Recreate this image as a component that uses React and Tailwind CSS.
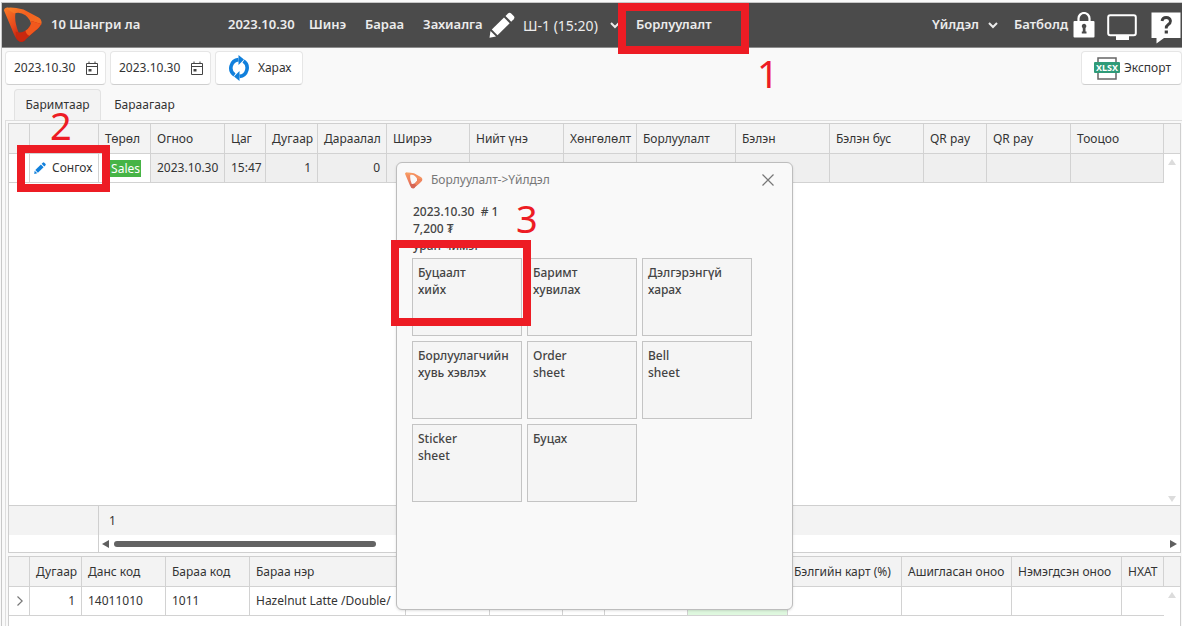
import React, { useState } from 'react';

const salesColumns = [
  { label: '', width: 'w-[21px]' },
  { label: '', width: 'w-[69px]' },
  { label: 'Төрөл', width: 'w-[52px]' },
  { label: 'Огноо', width: 'w-[74px]' },
  { label: 'Цаг', width: 'w-[41px]' },
  { label: 'Дугаар', width: 'w-[52px]' },
  { label: 'Дараалал', width: 'w-[69px]' },
  { label: 'Ширээ', width: 'w-[83px]' },
  { label: 'Нийт үнэ', width: 'w-[94px]' },
  { label: 'Хөнгөлөлт', width: 'w-[73px]' },
  { label: 'Борлуулалт', width: 'w-[99px]' },
  { label: 'Бэлэн', width: 'w-[94px]' },
  { label: 'Бэлэн бус', width: 'w-[94px]' },
  { label: 'QR pay', width: 'w-[63px]' },
  { label: 'QR pay', width: 'w-[84px]' },
  { label: 'Тооцоо', width: 'w-auto' },
];

const itemColumns = [
  { label: '', width: 'w-[21px]' },
  { label: 'Дугаар', width: 'w-[52px]' },
  { label: 'Данс код', width: 'w-[84px]' },
  { label: 'Бараа код', width: 'w-[84px]' },
  { label: 'Бараа нэр', width: 'w-[156px]' },
  { label: '', width: 'w-[84px]' },
  { label: '', width: 'w-[73px]' },
  { label: '', width: 'w-[42px]' },
  { label: '', width: 'w-[83px]' },
  { label: '', width: 'w-[100px]' },
  { label: 'Бэлгийн карт (%)', width: 'w-[114px]' },
  { label: 'Ашигласан оноо', width: 'w-[110px]' },
  { label: 'Нэмэгдсэн оноо', width: 'w-[110px]' },
  { label: 'НХАТ', width: 'w-auto' },
];

const actions = [
  ['Буцаалт', 'хийх'],
  ['Баримт', 'хувилах'],
  ['Дэлгэрэнгүй', 'харах'],
  ['Борлуулагчийн', 'хувь хэвлэх'],
  ['Order', 'sheet'],
  ['Bell', 'sheet'],
  ['Sticker', 'sheet'],
  ['Буцах'],
];

const Logo = ({ className }) => (
  <svg viewBox="0 0 40 36" className={className} aria-hidden="true">
    <defs>
      <linearGradient id="logoTop" x1="0" y1="0" x2="1" y2="0.4">
        <stop offset="0" stopColor="#f9852b" />
        <stop offset="0.6" stopColor="#f4601f" />
        <stop offset="1" stopColor="#f26a22" />
      </linearGradient>
      <linearGradient id="logoSide" x1="0" y1="0" x2="0.6" y2="1">
        <stop offset="0" stopColor="#fb7d26" />
        <stop offset="0.6" stopColor="#e8481c" />
        <stop offset="1" stopColor="#b81d10" />
      </linearGradient>
    </defs>
    <path d="M0 3Q0 0 4 0L12 5Q10 13 15 26L22 34Q18 37 14 34Q11 30 8 22Z" fill="url(#logoSide)" />
    <path d="M2 0.500Q8 -1 20 2L35 10Q40 13 38 18L28 18Q27 12 22 8Q17 4 10 6Z" fill="url(#logoTop)" />
    <path d="M38 17Q37 20 32 24L21 34Q17 37 14 33Q12 29 12 25Q17 27 22 24Q28 20 28 14Z" fill="#c9280f" />
    <path d="M38 17Q37 20 32 24L26 29Q23 28 22 24Q28 20 28 14Z" fill="#f0581d" />
  </svg>
);

const Chevron = () => (
  <svg viewBox="0 0 10 7" className="h-[7px] w-[10px]" fill="none" stroke="currentColor" strokeWidth="2" aria-hidden="true">
    <path d="M1 1l4 4 4-4" />
  </svg>
);

const Pencil = ({ className }) => (
  <svg viewBox="0 0 26 26" className={className} fill="currentColor" aria-hidden="true">
    <path d="M16.500 4l2.500-2.500q1.500-1.500 3.200 0l2.500 2.500q1.500 1.600 0 3.200L22.200 9.700z" />
    <path d="M15 5.500l5.700 5.700L8.500 23.200l-5.700-5.700z" />
    <path d="M1.500 19l5.500 5.500L0.500 25.800z" />
  </svg>
);

const LockIcon = () => (
  <svg viewBox="0 0 22 26" className="h-[26px] w-[22px]" aria-hidden="true">
    <path d="M5.500 10V6.500a5.500 5.500 0 0 1 11 0V10" fill="none" stroke="white" strokeWidth="2.200" />
    <rect x="0.500" y="9" width="21" height="16.500" rx="1" fill="white" />
    <path d="M8.800 14.500a2.300 2.300 0 1 1 3.700 1.500v3.500h1v2H8.800v-2h1v-3z" fill="#4b4b4b" />
  </svg>
);

const MonitorIcon = () => (
  <svg viewBox="0 0 30 27" className="h-[27px] w-[30px]" aria-hidden="true">
    <rect x="1.200" y="1.200" width="27.600" height="20" rx="2" fill="none" stroke="white" strokeWidth="2" />
    <path d="M9 21h13v5H9z" fill="white" />
  </svg>
);

const HelpIcon = () => (
  <svg viewBox="0 0 30 32" className="h-[32px] w-[30px]" aria-hidden="true">
    <path d="M0.500 0.500h29V26H13l-7.500 5.500V26h-5z" fill="white" />
    <path d="M11 9q0.500-3.500 4.200-3.500T19.500 9q0 2-2.200 3.500T15.200 16.500" fill="none" stroke="#3f3f3f" strokeWidth="2.800" />
    <rect x="13.700" y="18.500" width="3.200" height="3" fill="#3f3f3f" />
  </svg>
);

const CalendarIcon = () => (
  <svg viewBox="0 0 14 15" className="h-[15px] w-[14px]" fill="none" stroke="#444" strokeWidth="1" aria-hidden="true">
    <path d="M1.500 2.500h11v11h-11zM1.500 5.500h11M4 0.500v2M10 0.500v2" />
    <path d="M3.500 8h3v2.500h-3z" fill="#444" stroke="none" />
  </svg>
);

const RefreshIcon = () => (
  <svg viewBox="0 0 22 26" className="h-[26px] w-[22px]" aria-hidden="true">
    <path d="M6.500 20A8.500 8.500 0 0 1 10.500 4.600M15.500 6A8.500 8.500 0 0 1 11.500 21.400" fill="none" stroke="#1180dc" strokeWidth="3.600" />
    <path d="M10.500 0l5.500 4.600L10.500 10zM11.500 16v10l-5.500-4.600z" fill="#1180dc" />
  </svg>
);

const XlsxIcon = () => (
  <svg viewBox="0 0 26 23" className="h-[23px] w-[26px]" aria-hidden="true">
    <path d="M4 1h18v21H4z" fill="white" stroke="#666" strokeWidth="1.500" />
    <rect x="0" y="5" width="26" height="11" rx="1" fill="#2f9b78" />
    <text x="13" y="14" textAnchor="middle" fontSize="9" fontWeight="700" fill="white">XLSX</text>
  </svg>
);

const Triangle = ({ className = '', d }) => (
  <svg viewBox="0 0 8 8" className={`h-2 w-2 shrink-0 ${className}`} fill="currentColor" aria-hidden="true">
    <path d={d} />
  </svg>
);

const DateField = ({ label, value, onChange }) => (
  <div className="flex h-[34px] w-[101px] items-center rounded-sm border border-[#e6e6e6] border-b-[#cfcfcf] bg-white pl-2 pr-1.5">
    <input
      aria-label={label}
      type="text"
      value={value}
      onChange={(e) => onChange(e.target.value)}
      className="min-w-0 flex-1 bg-transparent outline-none"
    />
    <button type="button" aria-label={`${label} сонгох`}>
      <CalendarIcon />
    </button>
  </div>
);

const HeadRow = ({ columns }) => (
  <thead>
    <tr className="h-[30px] bg-[#f3f3f3] text-left">
      {columns.map((column, i) => (
        <th key={i} className="whitespace-nowrap border border-t-0 border-l-0 border-[#d2d2d2] px-1.5 font-normal">
          {column.label}
        </th>
      ))}
      <th className="border-b border-[#d2d2d2]" />
    </tr>
  </thead>
);

const Columns = ({ columns }) => (
  <colgroup>
    {columns.map((column, i) => (
      <col key={i} className={column.width} />
    ))}
    <col className="w-[16px]" />
  </colgroup>
);

const cell = 'whitespace-nowrap border-r border-b border-[#d2d2d2] px-1.5';

const TopBar = () => (
  <header className="flex h-[45px] shrink-0 items-center border-b border-[#8c8c8c] bg-[#4b4b4b] text-[13px] font-semibold text-[#ececec]">
    <Logo className="ml-0.5 h-[36px] w-[39px]" />
    <span className="ml-2 w-[177px] whitespace-nowrap">10 Шангри ла</span>
    <nav className="flex items-center whitespace-nowrap">
      <button type="button" className="w-[81px] text-left">2023.10.30</button>
      <button type="button" className="w-[56px] text-left">Шинэ</button>
      <button type="button" className="w-[58px] text-left">Бараа</button>
      <button type="button" className="flex w-[100px] items-center justify-between pr-2">
        Захиалга
        <Pencil className="h-[26px] w-[26px] shrink-0 text-white" />
      </button>
      <button type="button" className="flex w-[113px] items-center justify-between pr-4 text-[14px] font-normal">
        Ш-1 (15:20)
        <Chevron />
      </button>
      <button type="button">Борлуулалт</button>
    </nav>
    <div className="ml-auto flex items-center whitespace-nowrap">
      <button type="button" className="flex w-[82px] items-center justify-between pr-4">
        Үйлдэл
        <Chevron />
      </button>
      <button type="button" className="w-[59px] text-left">Батболд</button>
      <button type="button" aria-label="Түгжих" className="mr-3"><LockIcon /></button>
      <button type="button" aria-label="Дэлгэц" className="mr-3.5 pt-1"><MonitorIcon /></button>
      <button type="button" aria-label="Тусламж" className="mr-px pt-1.5"><HelpIcon /></button>
    </div>
  </header>
);

const ActionDialog = ({ onClose }) => (
  <div
    role="dialog"
    aria-label="Борлуулалт->Үйлдэл"
    className="absolute top-[162px] left-[396px] h-[448px] w-[397px] rounded-md border border-[#bdbdbd] bg-[#f9f9f9] shadow-sm"
  >
    <div className="flex h-[34px] items-center pl-2 pr-3 text-[#777]">
      <Logo className="h-[17px] w-[18px] opacity-70" />
      <span className="ml-2 flex-1">Борлуулалт-&gt;Үйлдэл</span>
      <button type="button" aria-label="Хаах" onClick={onClose} className="p-1.5">
        <svg viewBox="0 0 12 12" className="h-3 w-3" fill="none" stroke="#777" strokeWidth="1.200">
          <path d="M0.500 0.500l11 11M11.500 0.500l-11 11" />
        </svg>
      </button>
    </div>
    <div className="pt-1.5 pl-[15px] font-medium text-[#444]">
      <div className="h-[55px] overflow-hidden pl-px leading-[17px]">
        <p className="whitespace-pre">2023.10.30  # 1</p>
        <p>7,200 ₮</p>
        <p>уран чимэг</p>
      </div>
      <div className="grid grid-cols-[repeat(3,110px)] gap-[5px]">
        {actions.map((lines) => (
          <button
            key={lines[0]}
            type="button"
            className="flex h-[78px] flex-col items-start whitespace-nowrap border border-[#c4c4c4] bg-[#f5f5f5] px-[5px] pt-[5px] leading-[17px]"
          >
            {lines.map((line) => (
              <span key={line}>{line}</span>
            ))}
          </button>
        ))}
      </div>
    </div>
  </div>
);

const App = () => {
  const [from, setFrom] = useState('2023.10.30');
  const [to, setTo] = useState('2023.10.30');
  const [open, setOpen] = useState(true);

  return (
    <div className="relative flex h-screen flex-col overflow-hidden bg-[#f9f9f9] pt-0.5 font-['Noto_Sans',sans-serif] text-[12px] text-[#333]">
      <div className="ml-px flex min-h-0 flex-1 flex-col border-t border-l border-[#c8c8c8]">
        <TopBar />

        <div className="flex shrink-0 justify-between pt-[3px] pl-[3px]">
          <div className="flex gap-1">
            <DateField label="Эхлэх огноо" value={from} onChange={setFrom} />
            <DateField label="Дуусах огноо" value={to} onChange={setTo} />
            <button type="button" className="flex h-[34px] w-[88px] items-center gap-2 rounded-sm border border-[#e6e6e6] border-b-[#cfcfcf] bg-white pl-3">
              <RefreshIcon />
              Харах
            </button>
          </div>
          <button type="button" className="flex h-[34px] items-center gap-1 rounded-sm border border-[#e6e6e6] border-b-[#cfcfcf] bg-white pl-3 pr-2.5">
            <XlsxIcon />
            Экспорт
          </button>
        </div>

        <div role="tablist" className="flex h-[35px] shrink-0 items-end pl-3">
          <button type="button" role="tab" aria-selected="true" className="h-[31px] w-[87px] rounded-t-sm border border-b-0 border-[#e2e2e2] bg-[#f3f3f3]">
            Баримтаар
          </button>
          <button type="button" role="tab" aria-selected="false" className="h-[31px] w-[87px]">
            Бараагаар
          </button>
        </div>

        <main className="ml-[3px] flex min-h-0 flex-1 flex-col border-t border-l border-[#dedede] pt-0.5 pl-0.5">
          <section className="mr-px flex min-h-0 flex-1 flex-col border border-[#cfcfcf] bg-white">
            <table className="w-full table-fixed border-separate border-spacing-0">
              <Columns columns={salesColumns} />
              <HeadRow columns={salesColumns} />
              <tbody>
                <tr className="h-[29px] bg-[#efefef]">
                  <td className={`${cell} bg-white`} />
                  <td className="border-r border-b border-[#d2d2d2] bg-white">
                    <button type="button" onClick={() => setOpen(true)} className="flex items-center gap-1.5 pl-1">
                      <Pencil className="h-3 w-3 text-[#1180dc]" />
                      Сонгох
                    </button>
                  </td>
                  <td className="border-r border-b border-[#d2d2d2] bg-white pl-2">
                    <span className="block w-[34px] bg-[#46b446] pr-px text-right leading-[17px] text-white">Sales</span>
                  </td>
                  <td className={cell}>2023.10.30</td>
                  <td className={cell}>15:47</td>
                  <td className={`${cell} text-right`}>1</td>
                  <td className={`${cell} text-right`}>0</td>
                  {salesColumns.slice(7).map((column, i) => (
                    <td key={i} className={cell} />
                  ))}
                  <td className="bg-white pt-1 pl-1 align-top text-[#dcdcdc]">
                    <Triangle d="M4 1l4 6H0z" />
                  </td>
                </tr>
              </tbody>
            </table>
            <div className="flex flex-1 items-end justify-end pr-1 pb-0.5 text-[#dcdcdc]">
              <Triangle d="M0 1h8L4 7z" />
            </div>
            <div className="flex h-[47px] shrink-0 border-t border-[#cfcfcf]">
              <div className="w-[90px] border-r border-[#cfcfcf]">
                <div className="h-[29px] bg-[#f3f3f3]" />
              </div>
              <div className="flex-1">
                <div className="flex h-[29px] items-center bg-[#f3f3f3] pl-2.5">1</div>
                <div className="flex h-[17px] items-center gap-1 px-[3px] text-[#5f5f5f]">
                  <Triangle d="M7 0v8L0 4z" />
                  <div className="h-1.5 w-[262px] rounded-full bg-[#636363]" />
                  <Triangle className="ml-auto" d="M1 0v8l7-4z" />
                </div>
              </div>
            </div>
          </section>

          <section className="mt-[3px] mr-px h-[70px] shrink-0 border border-b-0 border-[#cfcfcf] bg-white">
            <table className="w-full table-fixed border-separate border-spacing-0">
              <Columns columns={itemColumns} />
              <HeadRow columns={itemColumns} />
              <tbody>
                <tr className="h-[29px]">
                  <td className="border-r border-b border-[#d2d2d2] pl-2 text-[#777]">
                    <svg viewBox="0 0 6 10" className="h-2.5 w-1.5" fill="none" stroke="currentColor" strokeWidth="1.200">
                      <path d="M0.500 0.500L5.200 5 0.500 9.500" />
                    </svg>
                  </td>
                  <td className={`${cell} text-right`}>1</td>
                  <td className={cell}>14011010</td>
                  <td className={cell}>1011</td>
                  <td className={cell}>Hazelnut Latte /Double/</td>
                  <td className={cell} />
                  <td className={cell} />
                  <td className={cell} />
                  <td className={cell} />
                  <td className={`${cell} bg-[#dff8df]`} />
                  <td className={cell} />
                  <td className={cell} />
                  <td className={cell} />
                  <td className="border-b border-[#d2d2d2]" />
                  <td className="pt-1 pl-1 align-top text-[#dcdcdc]">
                    <Triangle d="M4 1l4 6H0z" />
                  </td>
                </tr>
              </tbody>
            </table>
          </section>
        </main>
      </div>

      {open && <ActionDialog onClose={() => setOpen(false)} />}

      {/* step markers */}
      <div className="pointer-events-none absolute top-[3px] left-[618px] h-[51px] w-[131px] border-8 border-[#ed1c24]" />
      <div className="pointer-events-none absolute top-[145px] left-[17px] h-[47px] w-[93px] border-8 border-[#ed1c24]" />
      <div className="pointer-events-none absolute top-[240px] left-[391px] h-[86px] w-[140px] border-8 border-[#ed1c24]" />
      <span className="pointer-events-none absolute top-[59px] left-[757px] text-[38px] leading-7 text-[#ed1c24]">1</span>
      <span className="pointer-events-none absolute top-[111px] left-[50px] text-[38px] leading-7 text-[#ed1c24]">2</span>
      <span className="pointer-events-none absolute top-[204px] left-[516px] text-[38px] leading-7 text-[#ed1c24]">3</span>
    </div>
  );
};

export default App;
